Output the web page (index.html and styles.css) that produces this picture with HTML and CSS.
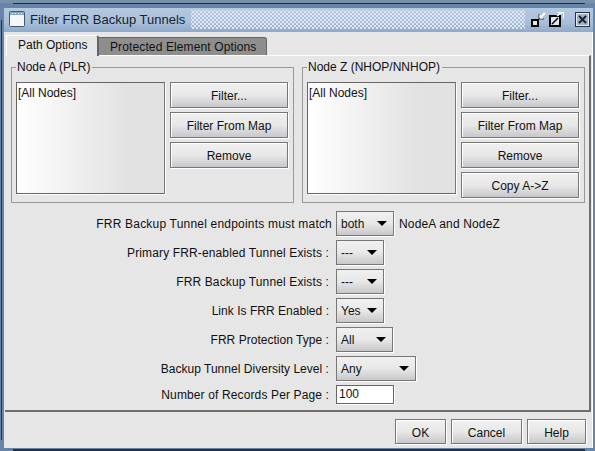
FILE: index.html
```html
<!DOCTYPE html>
<html lang="en">
<head>
    <meta charset="UTF-8">
    <title>Filter FRR Backup Tunnels</title>
    <link rel="stylesheet" href="styles.css">
</head>
<body>
    <div class="window">
        <div class="titlebar">
            <svg class="app-icon" width="16" height="16" viewBox="0 0 16 16">
                <rect x="0.5" y="0.5" width="15" height="15" rx="1" fill="#f4f6f9" stroke="#44576d"/>
                <rect x="1" y="1" width="14" height="3" fill="#8ba6c6"/>
                <path d="M3 2.5h1M6 2.5h1M9 2.5h1M12 2.5h1" stroke="#fff"/>
            </svg>
            <span class="title">Filter FRR Backup Tunnels</span>
            <div class="dither"></div>
            <div class="title-btns">
                <svg width="15" height="15" viewBox="0 0 15 15">
                    <rect x="1" y="8" width="6" height="6" fill="#dfe6ee" stroke="#000" stroke-width="2"/>
                    <path d="M14 1L9 6" stroke="#fff" stroke-width="2"/>
                    <path d="M8 2v5h5" fill="none" stroke="#23303e" stroke-width="1"/>
                    <path d="M9 3v3h3" fill="none" stroke="#fff" stroke-width="1"/>
                </svg>
                <svg width="15" height="15" viewBox="0 0 15 15">
                    <rect x="1" y="4" width="10" height="10" fill="#dfe6ee" stroke="#000" stroke-width="2"/>
                    <path d="M3 12L9 6" stroke="#000" stroke-width="1.500"/>
                    <path d="M8 4L13 0.500" stroke="#fff" stroke-width="1.500"/>
                    <path d="M8.500 0.500h6v6" fill="none" stroke="#fff" stroke-width="1"/>
                </svg>
                <svg class="close" width="15" height="15" viewBox="0 0 15 15">
                    <rect x="0.500" y="0.500" width="14" height="14" fill="#9fb3ca" stroke="#26323f"/>
                    <rect x="1.500" y="1.500" width="12" height="12" fill="none" stroke="#e4ebf3"/>
                    <path d="M4 4l7 7M11 4l-7 7" stroke="#1b2530" stroke-width="2"/>
                </svg>
            </div>
        </div>

        <div class="content">
            <div class="tabs">
                <div class="tab active">Path Options</div>
                <div class="tab">Protected Element Options</div>
            </div>

            <div class="panel">
                <div class="groups">
                    <fieldset class="group">
                        <legend>Node A (PLR)</legend>
                        <div class="list">[All Nodes]</div>
                        <div class="group-btns">
                            <div class="btn">Filter...</div>
                            <div class="btn">Filter From Map</div>
                            <div class="btn">Remove</div>
                        </div>
                    </fieldset>
                    <fieldset class="group">
                        <legend>Node Z (NHOP/NNHOP)</legend>
                        <div class="list">[All Nodes]</div>
                        <div class="group-btns">
                            <div class="btn">Filter...</div>
                            <div class="btn">Filter From Map</div>
                            <div class="btn">Remove</div>
                            <div class="btn">Copy A-&gt;Z</div>
                        </div>
                    </fieldset>
                </div>

                <div class="form">
                    <label class="widest">FRR Backup Tunnel endpoints must match</label>
                    <div class="field">
                        <div class="combo w58"><span>both</span><i></i></div>
                        <span class="after">NodeA and NodeZ</span>
                    </div>
                    <label class="wide">Primary FRR-enabled Tunnel Exists :</label>
                    <div class="field"><div class="combo w48"><span>---</span><i></i></div></div>
                    <label class="wide">FRR Backup Tunnel Exists :</label>
                    <div class="field"><div class="combo w48"><span>---</span><i></i></div></div>
                    <label>Link Is FRR Enabled :</label>
                    <div class="field"><div class="combo w48"><span>Yes</span><i></i></div></div>
                    <label>FRR Protection Type :</label>
                    <div class="field"><div class="combo w57"><span>All</span><i></i></div></div>
                    <label>Backup Tunnel Diversity Level :</label>
                    <div class="field"><div class="combo w80"><span>Any</span><i></i></div></div>
                    <label class="wide">Number of Records Per Page :</label>
                    <div class="field"><div class="textbox">100</div></div>
                </div>
            </div>

            <div class="footer">
                <div class="btn ok">OK</div>
                <div class="btn cancel">Cancel</div>
                <div class="btn help">Help</div>
            </div>
        </div>
    </div>
</body>
</html>
```

FILE: styles.css
```css
* {
    box-sizing: border-box;
}

html, body {
    margin: 0;
    height: 100%;
}

body {
    font-family: "Liberation Sans", Arial, sans-serif;
    font-size: 12px;
    color: #111;
    background: #6685a8;
    overflow: hidden;
}

.window {
    width: 595px;
    height: 451px;
    padding: 5px 2px 3px 4px;
    border-top: 3px solid #7890aa;
    display: flex;
    flex-direction: column;
    background:
        linear-gradient(#23303e, #23303e) 13px 0 / 572px 1px no-repeat,
        linear-gradient(#23303e, #23303e) 13px 100% / 572px 2px no-repeat,
        linear-gradient(#23303e, #23303e) 1px 17px / 1px 420px no-repeat,
        #6685a8;
}

.titlebar {
    height: 24px;
    flex: none;
    display: flex;
    align-items: center;
    padding: 0 3px 2px 5px;
    background: linear-gradient(#b4c8e0, #a9bfd9 60%, #8ea9c9);
    font-size: 13px;
    color: #16222e;
}

.app-icon {
    flex: none;
    margin-right: 5px;
}

.title {
    white-space: nowrap;
}

.dither {
    flex: 1;
    height: 19px;
    margin: 0 6px 0 6px;
    background-image:
        radial-gradient(circle, #dfe8f2 0.9px, transparent 1.1px),
        radial-gradient(circle, #dfe8f2 0.9px, transparent 1.1px);
    background-size: 4px 4px;
    background-position: 0 0, 2px 2px;
}

.title-btns {
    display: flex;
    align-items: center;
    gap: 3px;
    flex: none;
}

.title-btns .close {
    margin-left: 8px;
}

.content {
    flex: 1;
    background: #e6e6e6;
    padding: 3px 0 0 1px;
    display: flex;
    flex-direction: column;
    border-right: 1px solid #fff;
}

.tabs {
    display: flex;
    align-items: flex-end;
    height: 20px;
    flex: none;
    padding-left: 1px;
}

.tab {
    height: 18px;
    padding: 0 10px 0 11px;
    line-height: 18px;
    letter-spacing: 0.12px;
    background: #8e8e8e;
    color: #111;
    border-top: 1px solid #666;
    border-right: 1px solid #666;
    border-radius: 0 3px 0 0;
}

.tab.active {
    height: 21px;
    width: 93px;
    padding: 0 0 0 11px;
    line-height: 18px;
    letter-spacing: 0;
    background: #e6e6e6;
    border-top: 1px solid #fff;
    border-left: 1px solid #fff;
    border-right: 2px solid #666;
    position: relative;
    z-index: 1;
    margin-bottom: -1px;
}

.panel {
    height: 357px;
    flex: none;
    border-top: 1px solid #fff;
    border-right: 2px solid #6e6e6e;
    border-bottom: 2px solid #6e6e6e;
    padding: 4px 4px 0 6px;
    margin-right: 1px;
}

.groups {
    display: flex;
    gap: 8px;
    height: 151px;
}

.group {
    flex: 1;
    min-width: 0;
    margin: 0;
    height: 143px;
    border: 1px solid #999;
    padding: 8px 5px 8px 4px;
    display: flex;
    gap: 5px;
    align-items: flex-start;
}

.group legend {
    padding: 0 2px 0 1px;
    line-height: 14px;
}

.list {
    width: 149px;
    height: 112px;
    flex: none;
    padding: 3px 1px;
    border: 1px solid #666;
    border-right-color: #777;
    box-shadow: 1px 1px 0 #fff;
    background: linear-gradient(90deg, #fff, #e2e2e2 75%);
}

.group-btns {
    display: flex;
    flex-direction: column;
    gap: 4px;
    flex: 1;
}

.btn {
    height: 26px;
    padding-top: 1px;
    line-height: 24px;
    text-align: center;
    border: 1px solid #777;
    box-shadow: inset 1px 1px 0 #fff, 1px 1px 0 #fff;
    background: linear-gradient(#f0f0f0, #e8e8e8 50%, #c8c8cc);
}

.form {
    display: grid;
    grid-template-columns: 320px auto;
    grid-template-rows: repeat(6, 25px) 19px;
    row-gap: 4px;
    column-gap: 5px;
    align-items: center;
}

.form label {
    text-align: right;
    white-space: nowrap;
    letter-spacing: 0.03px;
    padding-right: 2px;
}

.form label.wide {
    letter-spacing: 0.13px;
}

.form label.widest {
    letter-spacing: 0.2px;
    padding-right: 0;
    margin-right: -1px;
}

.field {
    display: flex;
    align-items: center;
    gap: 5px;
}

.after {
    letter-spacing: 0.15px;
}

.combo {
    height: 25px;
    display: flex;
    align-items: center;
    justify-content: space-between;
    padding: 0 6px 0 4px;
    border: 1px solid #777;
    box-shadow: 1px 1px 0 #fff;
    background: linear-gradient(#f0f0f0, #e8e8e8 50%, #c8c8cc);
}

.combo i {
    width: 0;
    height: 0;
    border-left: 5px solid transparent;
    border-right: 5px solid transparent;
    border-top: 5px solid #000;
}

.w48 { width: 48px; }
.w57 { width: 57px; }
.w58 { width: 58px; }
.w80 { width: 80px; }

.textbox {
    width: 58px;
    height: 19px;
    line-height: 17px;
    padding-left: 2px;
    background: #fff;
    border: 1px solid #666;
    box-shadow: 1px 1px 0 #fff;
}

.footer {
    flex: 1;
    display: flex;
    justify-content: flex-end;
    align-items: center;
    gap: 5px;
    padding: 2px 6px 0 0;
}

.footer .btn {
    height: 25px;
}

.ok { width: 51px; }
.cancel { width: 71px; }
.help { width: 59px; }
```
